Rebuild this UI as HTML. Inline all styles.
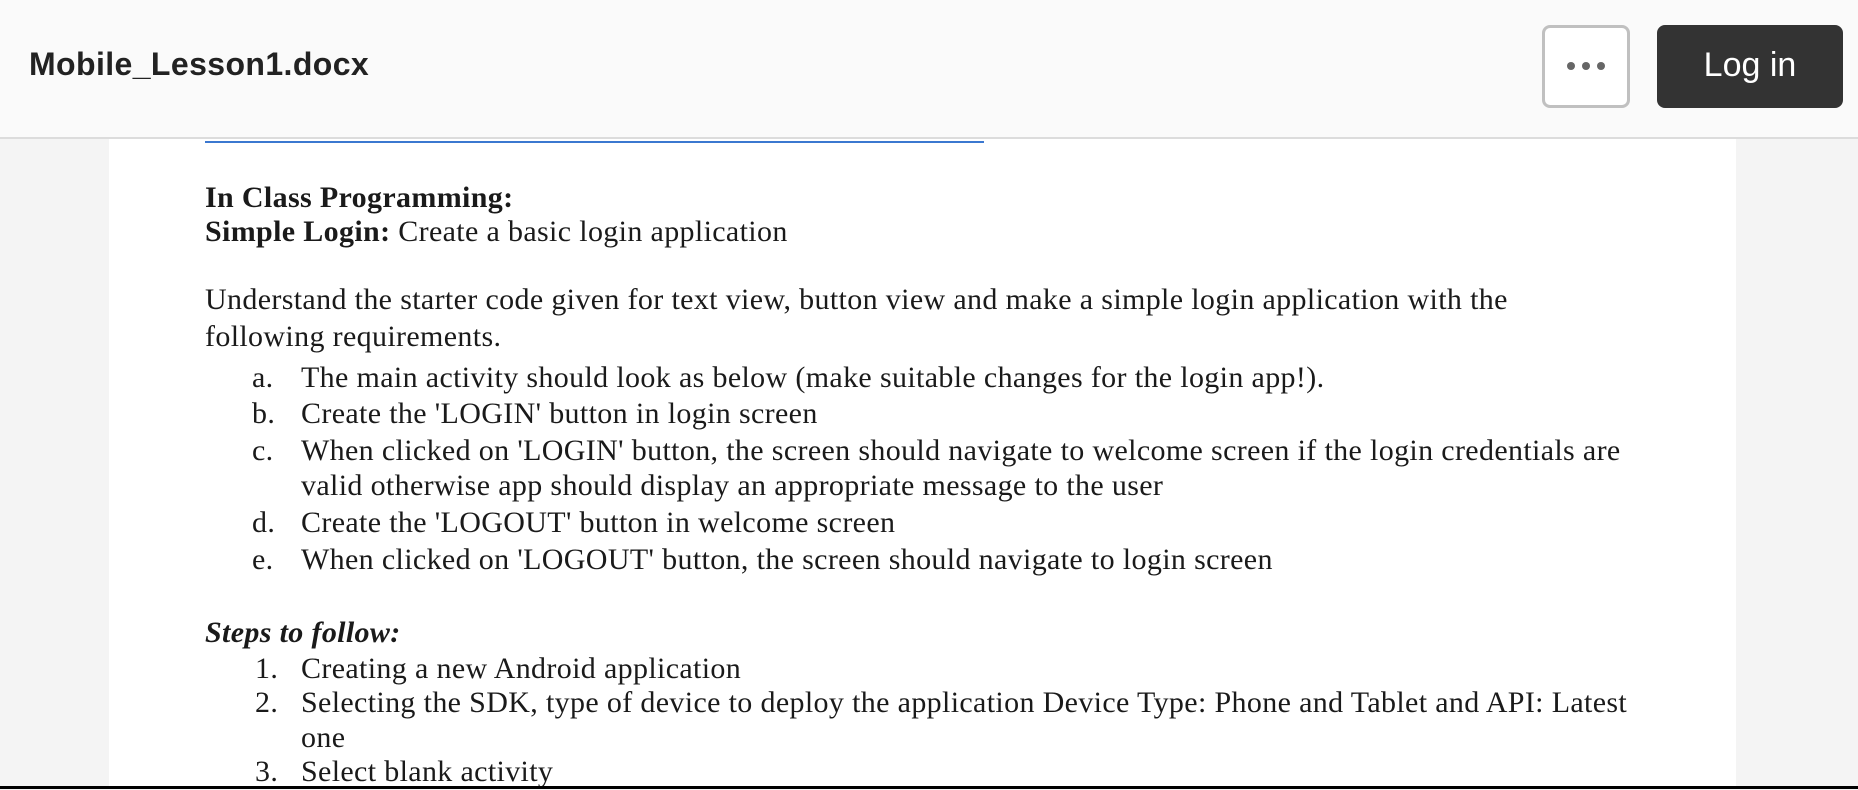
<!DOCTYPE html>
<html><head><meta charset="utf-8"><style>
*{margin:0;padding:0;box-sizing:border-box}
body{width:1858px;height:789px;overflow:hidden;background:#f4f4f4;position:relative;font-family:"Liberation Serif",serif;color:#1a1a1a}
.hdr{position:absolute;left:0;top:0;width:1858px;height:139px;background:#fafafa;border-bottom:2px solid #dcdcdc;z-index:2}
.title{position:absolute;left:29px;top:44px;font:bold 32px/40px "Liberation Sans",sans-serif;color:#222;letter-spacing:0.4px}
.dots{position:absolute;left:1542px;top:25px;width:88px;height:83px;border:3px solid #c0c0c0;border-radius:8px;background:#fff}
.dots i{position:absolute;top:34px;width:8px;height:8px;border-radius:50%;background:#666}
.login{position:absolute;left:1657px;top:25px;width:186px;height:83px;background:#333;border-radius:8px;color:#fff;font:34px/80px "Liberation Sans",sans-serif;text-align:center}
.page{position:absolute;left:109px;top:137px;width:1627px;height:652px;background:#fff}
.link{position:absolute;left:205px;top:141px;width:779px;height:2px;background:#3b78d0}
.l{position:absolute;font-size:30px;line-height:36px;white-space:nowrap;letter-spacing:0.35px}
.bot{position:absolute;left:0;top:786px;width:1858px;height:3px;background:#000}
</style></head><body>
<div class="page"></div>
<div class="link"></div>
<div class="l" style="left:205px;top:180px"><b>In Class Programming:</b></div>
<div class="l" style="left:205px;top:214px"><b>Simple Login:</b> Create a basic login application</div>
<div class="l" style="left:205px;top:282px">Understand the starter code given for text view, button view and make a simple login application with the</div>
<div class="l" style="left:205px;top:319px">following requirements.</div>
<div class="l" style="left:252px;top:360px">a.</div><div class="l" style="left:301px;top:360px">The main activity should look as below (make suitable changes for the login app!).</div>
<div class="l" style="left:252px;top:396px">b.</div><div class="l" style="left:301px;top:396px">Create the 'LOGIN' button in login screen</div>
<div class="l" style="left:252px;top:433px">c.</div><div class="l" style="left:301px;top:433px">When clicked on 'LOGIN' button, the screen should navigate to welcome screen if the login credentials are</div>
<div class="l" style="left:301px;top:468px">valid otherwise app should display an appropriate message to the user</div>
<div class="l" style="left:252px;top:505px">d.</div><div class="l" style="left:301px;top:505px">Create the 'LOGOUT' button in welcome screen</div>
<div class="l" style="left:252px;top:542px">e.</div><div class="l" style="left:301px;top:542px">When clicked on 'LOGOUT' button, the screen should navigate to login screen</div>
<div class="l" style="left:205px;top:615px"><b><i>Steps to follow:</i></b></div>
<div class="l" style="left:255px;top:651px">1.</div><div class="l" style="left:301px;top:651px">Creating a new Android application</div>
<div class="l" style="left:255px;top:685px">2.</div><div class="l" style="left:301px;top:685px">Selecting the SDK, type of device to deploy the application Device Type: Phone and Tablet and API: Latest</div>
<div class="l" style="left:301px;top:720px">one</div>
<div class="l" style="left:255px;top:754px">3.</div><div class="l" style="left:301px;top:754px">Select blank activity</div>
<div class="hdr">
<div class="title">Mobile_Lesson1.docx</div>
<div class="dots"><i style="left:22px"></i><i style="left:37px"></i><i style="left:52px"></i></div>
<div class="login">Log in</div>
</div>
<div class="bot"></div>
</body></html>
